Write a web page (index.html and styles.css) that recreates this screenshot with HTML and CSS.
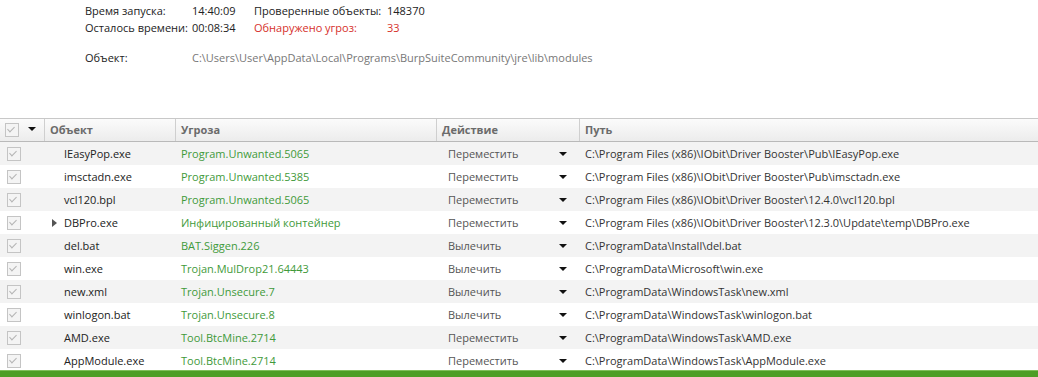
FILE: index.html
```html
<!DOCTYPE html>
<html lang="ru">
<head>
    <meta charset="UTF-8">
    <title>Сканирование</title>
    <link rel="stylesheet" href="styles.css">
</head>
<body>
    <div class="summary">
        <div class="stat-row">
            <span class="label">Время запуска:</span>
            <span class="value">14:40:09</span>
            <span class="label2">Проверенные объекты:</span>
            <span class="value">148370</span>
        </div>
        <div class="stat-row">
            <span class="label">Осталось времени:</span>
            <span class="value">00:08:34</span>
            <span class="label2 red">Обнаружено угроз:</span>
            <span class="value red">33</span>
        </div>
        <div class="stat-row object-row">
            <span class="label">Объект:</span>
            <span class="path-now">C:\Users\User\AppData\Local\Programs\BurpSuiteCommunity\jre\lib\modules</span>
        </div>
    </div>

    <div class="table">
        <div class="row head">
            <div class="cell check-cell"><span class="box"></span><span class="sort"></span></div>
            <div class="cell col-name">Объект</div>
            <div class="cell col-threat">Угроза</div>
            <div class="cell col-action">Действие</div>
            <div class="cell col-path">Путь</div>
        </div>
        <div id="rows"></div>
    </div>

    <div class="status-bar"></div>

    <script>
        const items = [
            { name: "IEasyPop.exe", threat: "Program.Unwanted.5065", action: "Переместить", path: "C:\\Program Files (x86)\\IObit\\Driver Booster\\Pub\\IEasyPop.exe" },
            { name: "imsctadn.exe", threat: "Program.Unwanted.5385", action: "Переместить", path: "C:\\Program Files (x86)\\IObit\\Driver Booster\\Pub\\imsctadn.exe" },
            { name: "vcl120.bpl", threat: "Program.Unwanted.5065", action: "Переместить", path: "C:\\Program Files (x86)\\IObit\\Driver Booster\\12.4.0\\vcl120.bpl" },
            { name: "DBPro.exe", threat: "Инфицированный контейнер", action: "Переместить", path: "C:\\Program Files (x86)\\IObit\\Driver Booster\\12.3.0\\Update\\temp\\DBPro.exe", container: true },
            { name: "del.bat", threat: "BAT.Siggen.226", action: "Вылечить", path: "C:\\ProgramData\\Install\\del.bat" },
            { name: "win.exe", threat: "Trojan.MulDrop21.64443", action: "Вылечить", path: "C:\\ProgramData\\Microsoft\\win.exe" },
            { name: "new.xml", threat: "Trojan.Unsecure.7", action: "Вылечить", path: "C:\\ProgramData\\WindowsTask\\new.xml" },
            { name: "winlogon.bat", threat: "Trojan.Unsecure.8", action: "Вылечить", path: "C:\\ProgramData\\WindowsTask\\winlogon.bat" },
            { name: "AMD.exe", threat: "Tool.BtcMine.2714", action: "Переместить", path: "C:\\ProgramData\\WindowsTask\\AMD.exe" },
            { name: "AppModule.exe", threat: "Tool.BtcMine.2714", action: "Переместить", path: "C:\\ProgramData\\WindowsTask\\AppModule.exe" }
        ];

        const rows = document.getElementById('rows');
        items.forEach((item, i) => {
            const row = document.createElement('div');
            row.className = 'row item' + (i % 2 === 0 ? ' odd' : '');
            row.innerHTML = `
                <div class="cell check-cell"><span class="box"></span></div>
                <div class="cell col-name">${item.container ? '<span class="expander"></span>' : ''}${item.name}</div>
                <div class="cell col-threat"><span class="${item.container ? 'threat container' : 'threat'}">${item.threat}</span></div>
                <div class="cell col-action"><span>${item.action}</span><span class="drop"></span></div>
                <div class="cell col-path">${item.path}</div>
            `;
            rows.appendChild(row);
        });
    </script>
</body>
</html>
```

FILE: styles.css
```css
body {
    margin: 0;
    width: 1038px;
    height: 377px;
    overflow: hidden;
    background: #fff;
    font-family: "Open Sans", "Noto Sans", sans-serif;
    font-size: 11px;
    color: #222;
    display: flex;
    flex-direction: column;
}
.summary {
    padding: 2px 0 0 85px;
    height: 116px;
    flex-shrink: 0;
}
.stat-row {
    display: flex;
    height: 17px;
    line-height: 17px;
}
.object-row {
    margin-top: 13px;
}
.label {
    width: 107px;
}
.value {
    width: 62px;
}
.label2 {
    width: 133px;
}
.red {
    color: #d6312b;
}
.path-now {
    color: #777;
}
.table {
    border-top: 1px solid #c8c8c8;
    flex: 1;
    min-height: 0;
    overflow: hidden;
}
.row {
    display: grid;
    grid-template-columns: 44px 131px 261px 143px 1fr;
    height: 23px;
    align-items: center;
}
.row.head {
    height: 22px;
    background: linear-gradient(to bottom, #fbfbfb, #ececec);
    border-bottom: 1px solid #b9b9b9;
    color: #6b6b6b;
    font-weight: bold;
}
.head .cell {
    height: 22px;
    line-height: 22px;
    border-left: 1px solid #cfcfcf;
    padding-left: 5px;
}
.head .check-cell {
    border-left: none;
}
.cell {
    white-space: nowrap;
    overflow: hidden;
}
.check-cell {
    display: flex;
    align-items: center;
    padding-left: 7px;
}
.box {
    width: 12px;
    height: 12px;
    border: 1px solid #c4c4c4;
    background: #f4f4f4;
    position: relative;
}
.box::after {
    content: "";
    position: absolute;
    left: 3px;
    top: 1px;
    width: 3px;
    height: 6px;
    border: solid #b4b4b4;
    border-width: 0 1px 1px 0;
    transform: rotate(45deg);
}
.sort,
.drop {
    width: 0;
    height: 0;
    border-left: 4px solid transparent;
    border-right: 4px solid transparent;
    border-top: 4px solid #111;
}
.sort {
    margin-left: 9px;
    margin-top: -3px;
}
.item {
    color: #222;
}
.item.odd {
    background: #f3f3f3;
}
.item .col-name {
    padding-left: 20px;
    position: relative;
}
.expander {
    position: absolute;
    left: 8px;
    top: 4px;
    width: 0;
    height: 0;
    border-top: 4px solid transparent;
    border-bottom: 4px solid transparent;
    border-left: 5px solid #555;
}
.threat {
    color: #3f9a3a;
    padding-left: 6px;
}
.threat.container {
    border-bottom: 1px dashed #3f9a3a;
}
.item .col-action {
    display: flex;
    align-items: center;
    justify-content: space-between;
    padding: 0 12px 0 12px;
    color: #555;
}
.item .col-path {
    padding-left: 6px;
    color: #333;
}
.status-bar {
    height: 6px;
    flex-shrink: 0;
    background: #4d9e26;
    border-top: 1px solid #7fbf5a;
}
```
